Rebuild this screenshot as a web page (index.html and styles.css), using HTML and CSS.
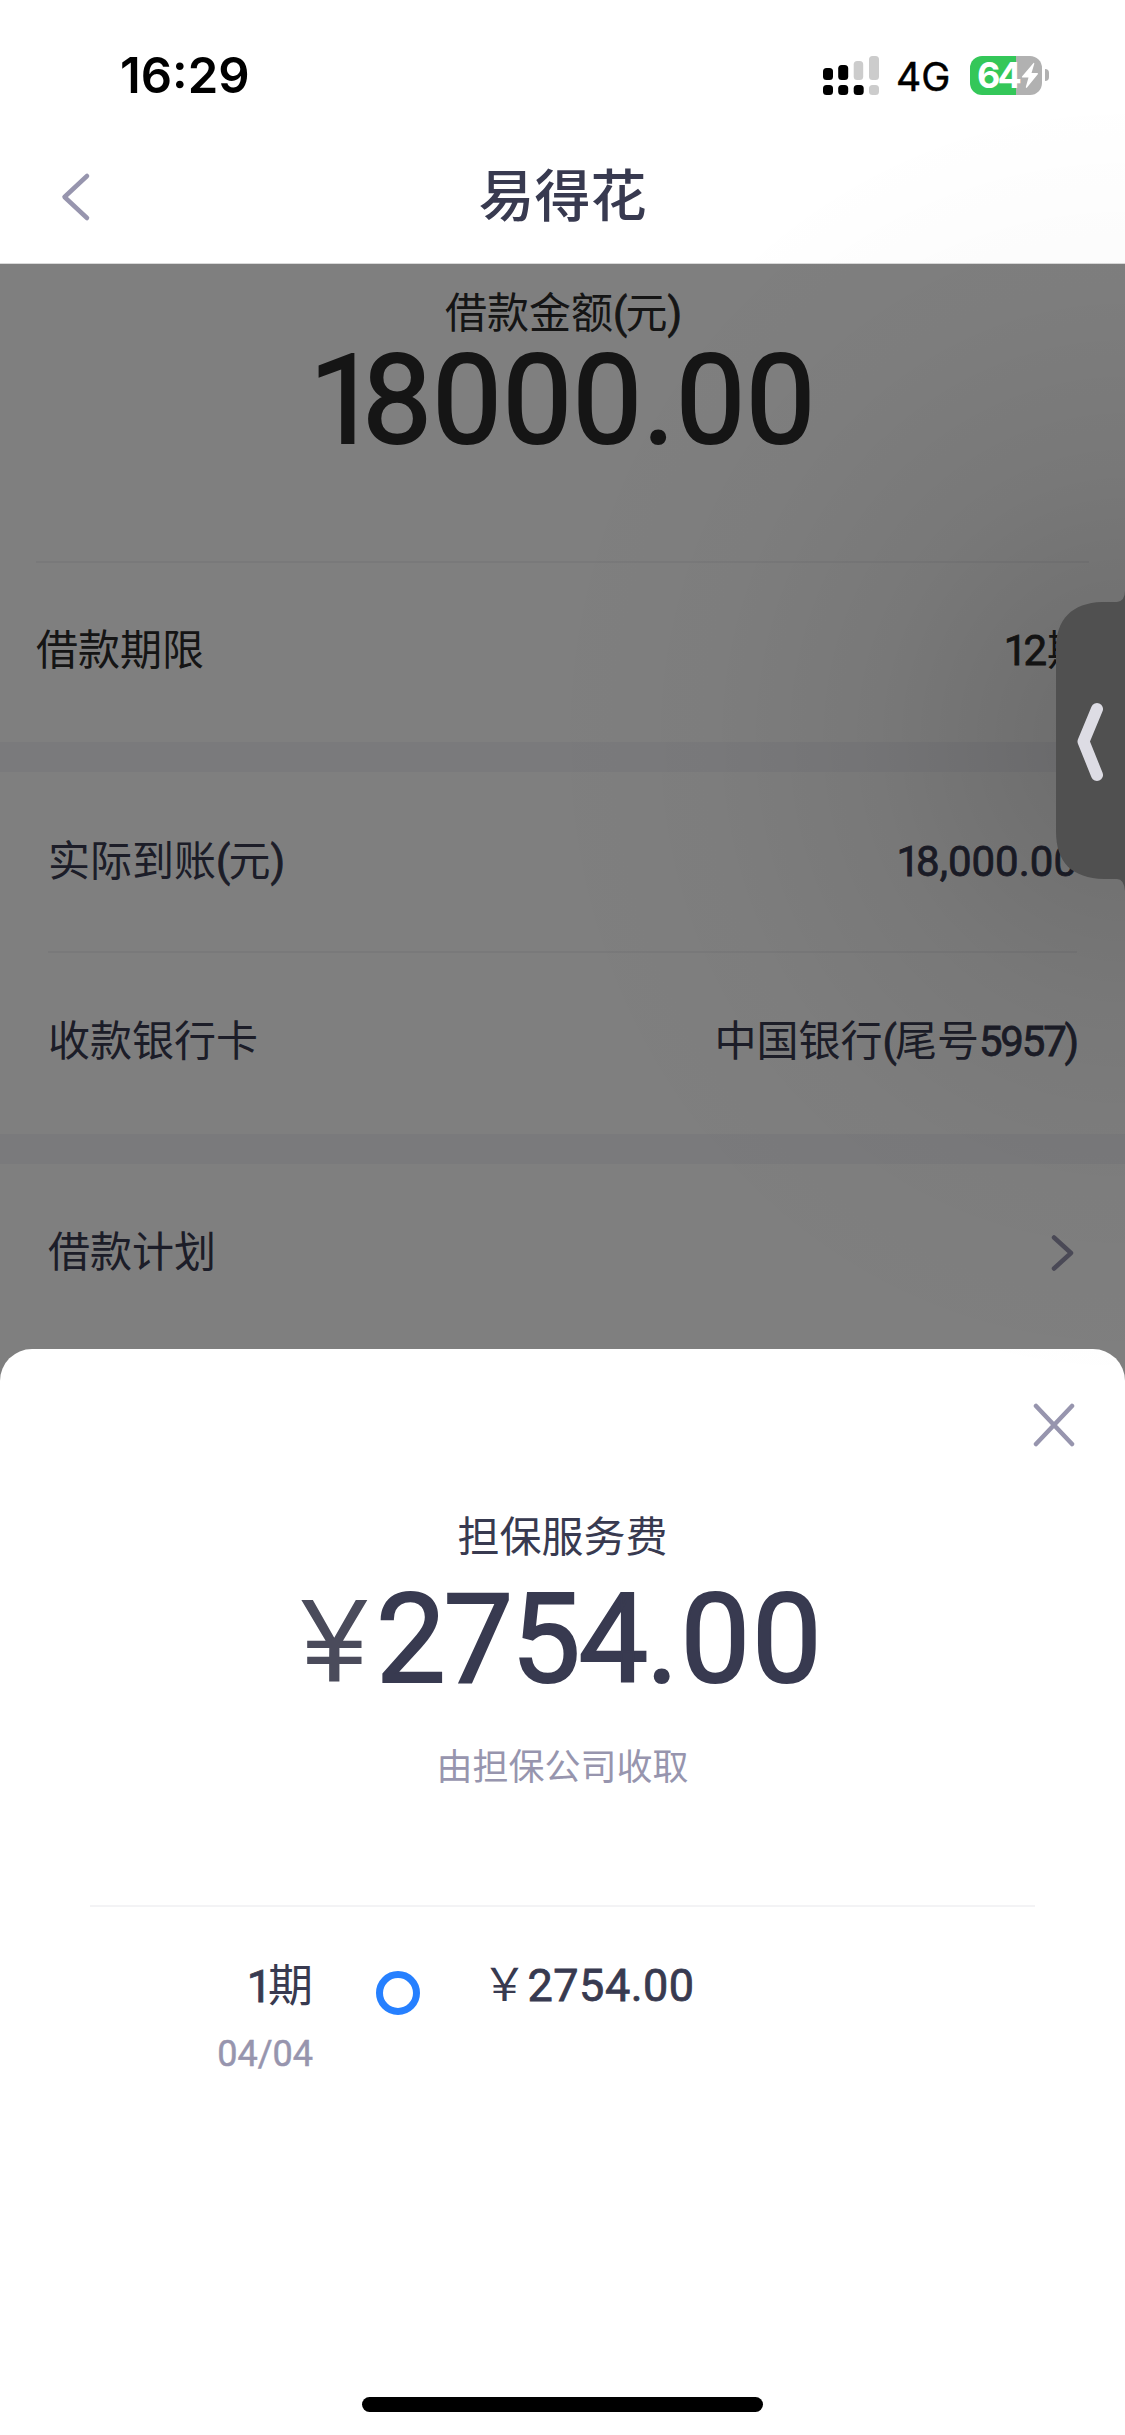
FILE: index.html
```html
<!DOCTYPE html>
<html lang="zh-CN">
<head>
<meta charset="utf-8">
<title>易得花</title>
<link rel="stylesheet" href="styles.css">
</head>
<body>
<div class="screen">
  <header class="header">
    <div class="status">
      <span class="time">16:29</span>
      <div class="indicators">
        <svg class="signal" width="56" height="39" viewBox="0 0 56 39">
          <rect x="0" y="12" width="10" height="12" rx="3.5"/>
          <rect x="15.200" y="9" width="10" height="15" rx="3.500"/>
          <rect class="off" x="30.700" y="5" width="9.500" height="19" rx="3.500"/>
          <rect class="off" x="46" y="0" width="10" height="24" rx="3.500"/>
          <rect x="0" y="29" width="10" height="10" rx="3.500"/>
          <rect x="15.200" y="29" width="10" height="10" rx="3.500"/>
          <rect x="30.700" y="29" width="10" height="10" rx="3.500"/>
          <rect class="off" x="46" y="29" width="10" height="10" rx="3.500"/>
        </svg>
        <span class="network">4G</span>
        <div class="battery">
          <div class="battery-body">
            <span class="level">64</span>
            <svg class="bolt" width="18" height="27" viewBox="0 0 18 27"><path d="M12.500 1 L1 14.500 Q.5 15.500 1.500 15.500 H7.500 L4.800 25 Q5 26.500 6 25.500 L17 12 Q17.300 11 16 11 H10.500 L13.300 1.800 Q13.300 .5 12.500 1Z"/></svg>
          </div>
          <i class="battery-tip"></i>
        </div>
      </div>
    </div>
    <nav class="nav">
      <svg class="back" width="32" height="50" viewBox="0 0 32 50"><path d="M27 4 L4.500 25 L27 46"/></svg>
      <h1>易得花</h1>
    </nav>
  </header>

  <main class="page">
    <section class="amount">
      <p class="label">借款金额<span class="n paren">(</span>元<span class="n paren">)</span></p>
      <p class="big"><span class="one">1</span>8000.00</p>
    </section>
    <div class="row row-term"><span>借款期限</span><span class="value"><span class="n"><span class="slim">1</span>2</span>期</span></div>
    <div class="band"></div>
    <div class="row lined"><span>实际到账<span class="n paren">(</span>元<span class="n paren">)</span></span><span class="value n"><span class="slim">1</span>8,000.00</span></div>
    <div class="row row-card"><span>收款银行卡</span><span class="value">中国银行<span class="n paren">(</span>尾号<span class="n tight">5957)</span></span></div>
    <div class="band"></div>
    <div class="row row-plan">
      <span>借款计划</span>
      <svg class="more" width="26" height="38" viewBox="0 0 26 38"><path d="M3 3.500 L20 19 L3 34.500"/></svg>
    </div>
  </main>
  <div class="mask"></div>

  <section class="sheet">
    <svg class="close" width="42" height="44" viewBox="0 0 42 44"><path d="M3 3 L39 41 M39 3 L3 41"/></svg>
    <h2>担保服务费</h2>
    <p class="fee"><span class="yen">¥</span><span class="whole">2754</span>.00</p>
    <p class="note">由担保公司收取</p>
    <div class="plan">
      <div class="when">
        <p class="period"><span class="n slim">1</span>期</p>
        <p class="date">04/04</p>
      </div>
      <i class="dot"></i>
      <p class="pay"><span class="cjk">￥</span><span class="n">2754.00</span></p>
    </div>
    <i class="home"></i>
  </section>

  <div class="glow"></div>
  <svg class="handle" width="69" height="300" viewBox="0 0 69 300">
    <path class="tab" d="M69 0 Q69 10 61 11 H46 C16 12 0 28 0 58 V240 C0 272 16 287 48 288 H61 Q68 288 69 300 Z"/>
    <path class="arrow" d="M41 118 L27.500 150.500 L41 184"/>
  </svg>
</div>
</body>
</html>
```
FILE: styles.css
```css
* { box-sizing: border-box; margin: 0; padding: 0; }
body {
  font-family: Roboto, "Noto Sans CJK SC", sans-serif;
  font-size: 42px;
  color: #383a50;
  background: #fff;
}
.screen { position: relative; width: 1125px; height: 2435px; overflow: hidden; background: #fff; }
svg { display: block; }
.n { font-family: Roboto, sans-serif; font-weight: 400; -webkit-text-stroke: .8px currentColor; }
.cjk { font-family: "Noto Sans CJK SC", sans-serif; }
.paren { letter-spacing: -2px; }
.slim { letter-spacing: -4px; }

.header { height: 264px; border-bottom: 1px solid #d9d9d9; }
.status { height: 150px; padding: 0 76px 0 120px; display: flex; justify-content: space-between; align-items: center; font-family: Inter, sans-serif; color: #000; }
.time { font-size: 49px; font-weight: 600; }
.indicators { display: flex; align-items: center; }
.signal .off { fill: #ccc; }
.network { width: 91px; padding-left: 17px; padding-top: 3px; font-size: 39px; font-weight: 400; -webkit-text-stroke: .5px currentColor; }
.battery { display: flex; align-items: center; gap: 3px; }
.battery-body { width: 72px; height: 39px; padding-left: 7px; display: flex; align-items: center; border-radius: 12px; background: linear-gradient(90deg, #34c759 46px, #b1b1b1 46px); }
.level { width: 44px; font-size: 36px; line-height: 39px; font-weight: 700; color: #fff; letter-spacing: -3px; }
.bolt { fill: #fff; }
.battery-tip { width: 4px; height: 12px; border-radius: 0 5px 5px 0; background: #b1b1b1; }

.nav { height: 94px; padding: 0 60px; display: grid; grid-template-columns: 32px 1fr 32px; align-items: center; }
.back path, .close path { fill: none; stroke: #9795ae; stroke-width: 4.500; stroke-linecap: round; stroke-linejoin: round; }
h1 { font-size: 56px; font-weight: 500; line-height: 80px; text-align: center; }

.amount { height: 299px; margin: 0 36px; padding-top: 20px; border-bottom: 2px solid #f3f3f5; text-align: center; color: #2b2b2b; }
.label { line-height: 60px; }
.big { margin-top: -1px; font-size: 124px; line-height: 116px; font-weight: 400; letter-spacing: .4px; -webkit-text-stroke: 2px currentColor; }
.big .one { margin-right: -17px; }
.row { height: 181px; margin: 0 48px; display: flex; justify-content: space-between; align-items: center; line-height: 60px; }
.row-term { height: 179px; margin: 0 36px; padding-bottom: 3px; color: #2b2b2b; }
.lined { border-bottom: 2px solid #f3f3f5; }
.row-card, .row-plan { padding-bottom: 3px; }
.tight { letter-spacing: -2.200px; }
.band { height: 30px; background: #f5f5f9; }
.more path { fill: none; stroke: #9795ae; stroke-width: 4.500; stroke-linecap: round; stroke-linejoin: round; }
.mask { position: absolute; inset: 264px 0 0; background: rgba(0, 0, 0, .5); }

.sheet { position: absolute; left: 0; right: 0; bottom: 0; height: 1086px; padding-top: 54px; display: flex; flex-direction: column; border-radius: 32px 32px 0 0; background: #fff; }
.close { align-self: flex-end; margin-right: 50px; }
h2 { margin-top: 61px; font-size: 42px; line-height: 60px; font-weight: 400; text-align: center; }
.fee { height: 116px; margin-top: 14px; font-size: 124px; line-height: 116px; font-weight: 400; letter-spacing: 1.800px; text-align: center; -webkit-text-stroke: 2px currentColor; }
.whole { letter-spacing: -2.200px; }
.yen { font-family: "Liberation Sans", sans-serif; font-size: 118px; letter-spacing: 9px; color: #4a4b5b; -webkit-text-stroke: 0; }
.note { margin-top: 40px; font-size: 36px; line-height: 60px; color: #9795ae; text-align: center; }
.plan { margin: 107px 90px 0; padding-top: 50px; border-top: 2px solid #f3f3f5; display: flex; }
.when { width: 223px; text-align: right; }
.period { font-size: 45px; line-height: 60px; }
.date { margin-top: 7px; font-size: 36px; line-height: 60px; color: #9795ae; -webkit-text-stroke: .5px currentColor; }
.dot { width: 44px; height: 44px; margin: 14px 62px 0 63px; border: 7px solid #2680ff; border-radius: 50%; }
.pay { height: 60px; margin-top: -5px; font-size: 45px; line-height: 60px; letter-spacing: .5px; }
.home { width: 401px; height: 15px; margin: auto auto 23px; border-radius: 8px; background: #000; }

.glow { position: absolute; inset: 0; background: radial-gradient(600px 650px at 1125px 740px, rgba(0, 0, 0, .16), rgba(0, 0, 0, .125) 14%, rgba(0, 0, 0, .055) 42%, rgba(0, 0, 0, .014) 70%, transparent); }
.handle { position: absolute; right: 0; top: 591px; }
.tab { fill: #505050; }
.arrow { fill: none; stroke: #dddce4; stroke-width: 12; stroke-linecap: round; stroke-linejoin: round; }
```
